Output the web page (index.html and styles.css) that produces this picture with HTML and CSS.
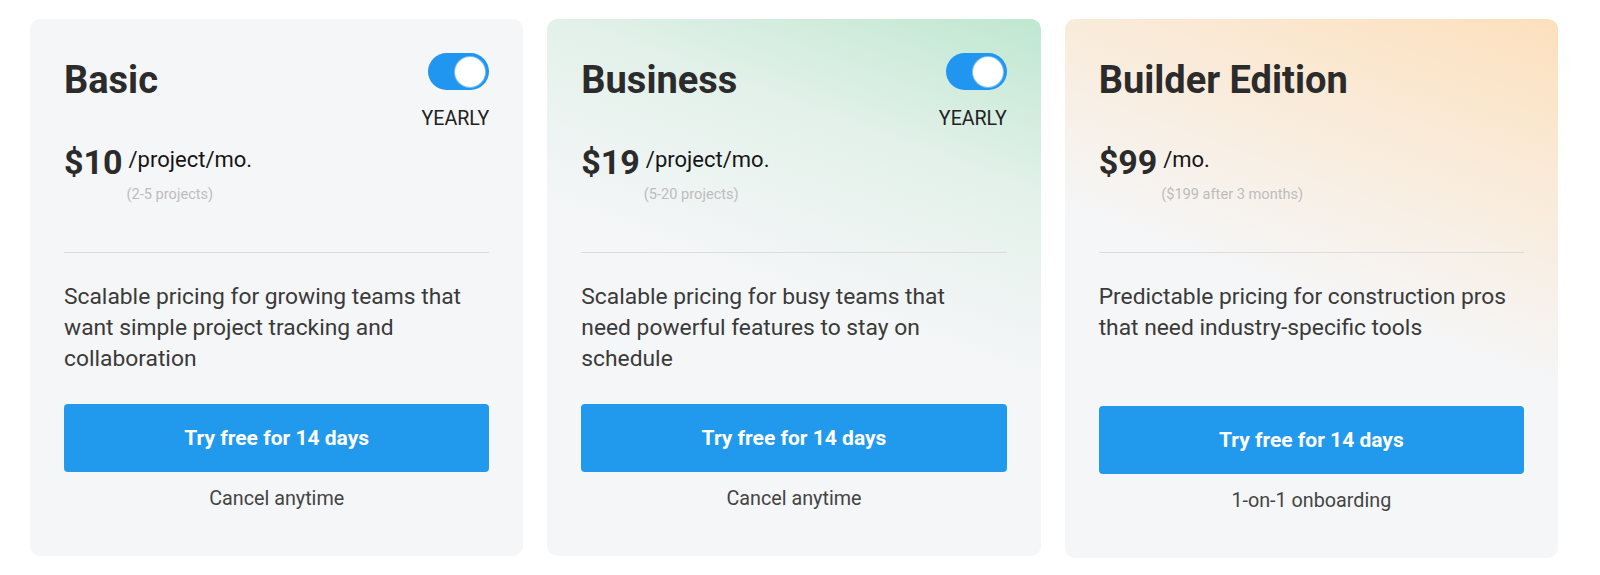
FILE: index.html
```html
<!DOCTYPE html>
<html lang="en">
<head>
<meta charset="utf-8">
<title>Pricing</title>
<link rel="stylesheet" href="styles.css">
</head>
<body>
<main class="plans">
  <section class="card">
    <div class="card-head">
      <h2 class="title">Basic</h2>
      <div class="billing">
        <span class="toggle"><span class="knob"></span></span>
        <span class="billing-label">YEARLY</span>
      </div>
    </div>
    <div class="price">
      <span class="amount">$10</span>
      <div class="price-meta">
        <span class="unit">/project/mo.</span>
        <span class="note">(2-5 projects)</span>
      </div>
    </div>
    <hr class="divider">
    <p class="desc">Scalable pricing for growing teams that want simple project tracking and collaboration</p>
    <div class="footer">
      <a class="cta" href="#">Try free for 14 days</a>
      <p class="fine">Cancel anytime</p>
    </div>
  </section>

  <section class="card card-green">
    <div class="card-head">
      <h2 class="title">Business</h2>
      <div class="billing">
        <span class="toggle"><span class="knob"></span></span>
        <span class="billing-label">YEARLY</span>
      </div>
    </div>
    <div class="price">
      <span class="amount">$19</span>
      <div class="price-meta">
        <span class="unit">/project/mo.</span>
        <span class="note">(5-20 projects)</span>
      </div>
    </div>
    <hr class="divider">
    <p class="desc">Scalable pricing for busy teams that need powerful features to stay on schedule</p>
    <div class="footer">
      <a class="cta" href="#">Try free for 14 days</a>
      <p class="fine">Cancel anytime</p>
    </div>
  </section>

  <section class="card card-peach">
    <div class="card-head">
      <h2 class="title">Builder Edition</h2>
    </div>
    <div class="price">
      <span class="amount">$99</span>
      <div class="price-meta">
        <span class="unit">/mo.</span>
        <span class="note">($199 after 3 months)</span>
      </div>
    </div>
    <hr class="divider">
    <p class="desc desc-tall">Predictable pricing for construction pros that need industry-specific tools</p>
    <div class="footer">
      <a class="cta" href="#">Try free for 14 days</a>
      <p class="fine">1-on-1 onboarding</p>
    </div>
  </section>
</main>
</body>
</html>
```

FILE: styles.css
```css
* { box-sizing: border-box; }

html, body {
  margin: 0;
  padding: 0;
  background: #ffffff;
}

body {
  font-family: Roboto, "Liberation Sans", Arial, sans-serif;
  color: #2b2b2b;
}

.plans {
  display: grid;
  grid-template-columns: repeat(3, 1fr);
  gap: 24px;
  width: 1558px;
  padding: 19px 0 0 30px;
  align-items: start;
}

.card {
  display: flex;
  flex-direction: column;
  background: #f5f6f8;
  border-radius: 10px;
  padding: 34px 34px 46px;
}

.card-green {
  background: linear-gradient(200deg, #bfe7d0 0%, #e3f1ea 25%, #f5f6f8 52%);
}

.card-peach {
  background: linear-gradient(200deg, #fde0bd 0%, #f9ecdc 27%, #f5f6f8 52%);
}

.card-head {
  display: flex;
  justify-content: space-between;
  align-items: flex-start;
  height: 77px;
}

.title {
  margin: 4px 0 0;
  font-size: 38px;
  line-height: 46px;
  font-weight: 700;
  color: #2b2b2b;
}

.billing {
  display: flex;
  flex-direction: column;
  align-items: flex-end;
}

.toggle {
  position: relative;
  display: block;
  width: 61px;
  height: 37px;
  border-radius: 19px;
  background: #2196f0;
}

.knob {
  position: absolute;
  top: 3.5px;
  right: 4px;
  width: 30px;
  height: 30px;
  border-radius: 50%;
  background: #ffffff;
  box-shadow: 0 0 0 1px #7cc0f5;
}

.billing-label {
  margin-top: 18px;
  font-size: 19.6px;
  line-height: 22px;
  font-weight: 400;
  color: #222222;
}

.price {
  display: flex;
  align-items: flex-start;
  gap: 6px;
  margin-top: 12px;
}

.amount {
  font-size: 34px;
  line-height: 40px;
  font-weight: 700;
  color: #2b2b2b;
}

.price-meta {
  display: flex;
  flex-direction: column;
  margin-top: 5px;
}

.unit {
  font-size: 22px;
  line-height: 26px;
  color: #151515;
}

.note {
  margin-top: 13px;
  margin-left: -2px;
  font-size: 14.6px;
  line-height: 16px;
  color: #bdbdbd;
}

.divider {
  margin: 50px 0 0;
  border: 0;
  height: 1px;
  background: #dcdcdc;
}

.desc {
  margin: 28px 0 30px;
  padding-right: 8px;
  font-size: 22.8px;
  line-height: 31px;
  color: #3a3a3a;
}

.desc-tall {
  min-height: 95px;
}

.footer {
  margin-top: auto;
  display: flex;
  flex-direction: column;
  align-items: stretch;
}

.cta {
  display: flex;
  align-items: center;
  justify-content: center;
  height: 68px;
  border-radius: 4px;
  background: #2199ec;
  color: #ffffff;
  font-size: 21px;
  font-weight: 700;
  text-decoration: none;
}

.fine {
  margin: 16px 0 0;
  text-align: center;
  font-size: 19.75px;
  line-height: 22px;
  color: #444444;
}
```
